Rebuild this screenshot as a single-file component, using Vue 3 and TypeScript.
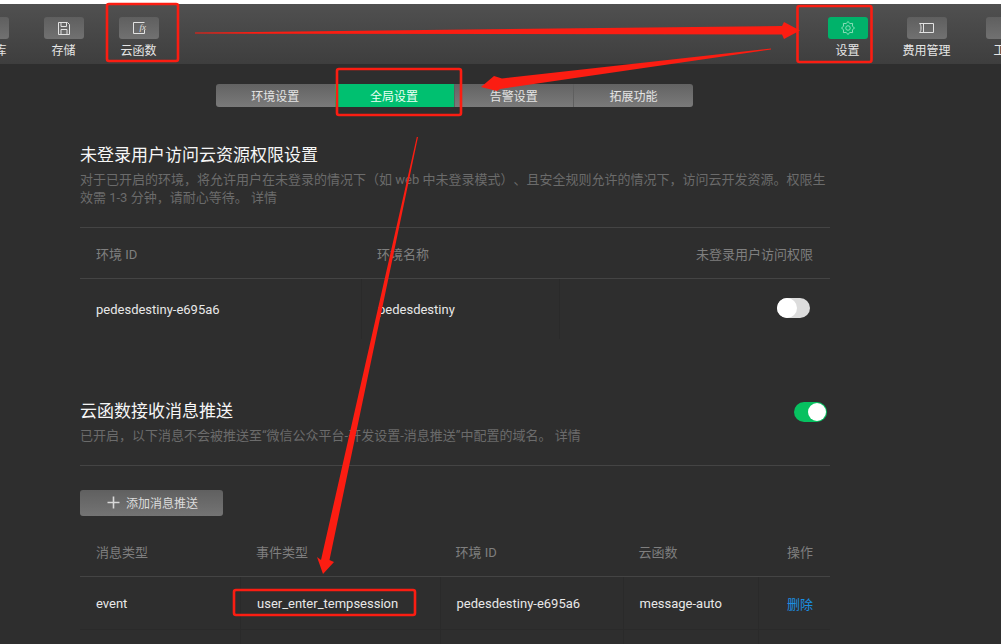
<script setup lang="ts">
const tabs = ['环境设置', '全局设置', '告警设置', '拓展功能']
</script>

<template>
  <div class="page">
    <header class="toolbar">
      <div class="group left">
        <div class="tool"><span class="tool-btn"></span><span class="tool-label">数据库</span></div>
        <div class="tool">
          <span class="tool-btn">
            <svg width="12" height="13" viewBox="0 0 12 13" fill="none" stroke="#e2e2e2" stroke-width="1">
              <path d="M0.5 0.5H9.5L11.5 2.5V12.5H0.5Z" />
              <path d="M3 0.5V4.5H8.5V0.5" />
              <path d="M3 12.5V7.5H9V12.5" />
            </svg>
          </span>
          <span class="tool-label">存储</span>
        </div>
        <div class="tool">
          <span class="tool-btn">
            <svg width="12" height="12" viewBox="0 0 12 12" fill="none" stroke="#e2e2e2" stroke-width="1">
              <path d="M11.5 8V11.5H0.5V0.5H11.5" />
            </svg>
            <i class="fx">fx</i>
          </span>
          <span class="tool-label">云函数</span>
        </div>
      </div>
      <div class="group right">
        <div class="tool wide">
          <span class="tool-btn active">
            <svg width="14" height="14" viewBox="0 0 16 16" fill="none" stroke="#8fe0bb" stroke-width="1.1">
              <path d="M8 .5L10.07 3.01L13.3 2.7L12.99 5.93L15.5 8L12.99 10.07L13.3 13.3L10.07 12.99L8 15.5L5.93 12.99L2.7 13.3L3.01 10.07L.5 8L3.01 5.93L2.7 2.7L5.93 3.01Z" />
              <circle cx="8" cy="8" r="2.6" />
            </svg>
          </span>
          <span class="tool-label">设置</span>
        </div>
        <div class="tool wide">
          <span class="tool-btn">
            <svg width="17" height="12" viewBox="0 0 17 12" fill="none" stroke="#e2e2e2" stroke-width="1">
              <path d="M1.5 1.5H15.5V10.5H1.5C3 9 3 8 3 6C3 4 3 3 1.5 1.5Z" />
              <path d="M5.5 1.5V10.5" />
            </svg>
          </span>
          <span class="tool-label">费用管理</span>
        </div>
        <div class="tool wide"><span class="tool-btn"></span><span class="tool-label">工具</span></div>
      </div>
    </header>

    <main class="content">
      <nav class="tabs">
        <span v-for="(t, i) in tabs" :key="t" class="tab" :class="{ on: i === 1 }">{{ t }}</span>
      </nav>

      <section class="first">
        <h2>未登录用户访问云资源权限设置</h2>
        <p class="desc">对于已开启的环境，将允许用户在未登录的情况下（如 web 中未登录模式）、且安全规则允许的情况下，访问云开发资源。权限生<br />效需 1-3 分钟，请耐心等待。 详情</p>
        <div class="table t1">
          <div class="row head">
            <span class="cell">环境 ID</span>
            <span class="cell">环境名称</span>
            <span class="cell end">未登录用户访问权限</span>
          </div>
          <div class="row body">
            <span class="cell">pedesdestiny-e695a6</span>
            <span class="cell">pedesdestiny</span>
            <span class="cell end"><span class="switch"></span></span>
          </div>
        </div>
      </section>

      <section class="second">
        <div class="title-row">
          <h2>云函数接收消息推送</h2>
          <span class="switch on"></span>
        </div>
        <p class="desc solo">已开启，以下消息不会被推送至“微信公众平台-开发设置-消息推送”中配置的域名。 详情</p>
        <button class="add" type="button">
          <svg width="13" height="13" viewBox="0 0 13 13" stroke="#d8d8d8" stroke-width="1.6"><path d="M6.5 0.5V12.5M0.5 6.5H12.5" /></svg>
          添加消息推送
        </button>
        <div class="table t2">
          <div class="row head">
            <span class="cell">消息类型</span>
            <span class="cell">事件类型</span>
            <span class="cell">环境 ID</span>
            <span class="cell">云函数</span>
            <span class="cell end">操作</span>
          </div>
          <div class="row body">
            <span class="cell">event</span>
            <span class="cell">user_enter_tempsession</span>
            <span class="cell">pedesdestiny-e695a6</span>
            <span class="cell">message-auto</span>
            <span class="cell end"><a class="link">删除</a></span>
          </div>
          <div class="row empty">
            <span class="cell"></span><span class="cell"></span><span class="cell"></span><span class="cell"></span><span class="cell"></span>
          </div>
        </div>
      </section>
    </main>

    <svg class="marks" width="1001" height="644" viewBox="0 0 1001 644" fill="none">
      <g stroke="#fb1d12" stroke-width="2.6">
        <rect x="107" y="4" width="71" height="57" rx="2" />
        <rect x="797.5" y="6" width="74" height="56" rx="2" />
        <rect x="337" y="69" width="124" height="46" rx="2" />
        <rect x="234" y="590" width="181" height="25" rx="2" />
      </g>
      <g fill="#fb1d12">
        <path d="M195 32.6L782 26L784 22L800 30.5L784 39L782 34.5L195 33.6Z" />
        <path d="M771 48.5L502 78.5L494 76L481 87L497 91L500 89L771 49.4Z" />
        <path d="M418 137L329.5 560L334 562L323 574L317 557L321 560L416.8 137Z" />
      </g>
    </svg>
  </div>
</template>

<style>
html, body { margin: 0; background: #fff; }
</style>

<style scoped>
.page {
  position: relative;
  width: 1001px;
  height: 644px;
  overflow: hidden;
  box-sizing: border-box;
  padding-top: 4px;
  background: #2e2e2e;
  font-family: Roboto, "Noto Sans CJK SC", sans-serif;
  text-spacing-trim: space-all;
  color: #e8e8e8;
}
.page::before {
  content: "";
  position: absolute;
  inset: 0 0 auto 0;
  height: 4px;
  background: #fff;
}
.toolbar {
  display: flex;
  height: 60px;
  background: linear-gradient(#505050, #3e3e3e);
  overflow: hidden;
}
.group { display: flex; flex: none; }
.left { margin-left: -49px; }
.right { margin-left: auto; margin-right: -44px; }
.tool {
  display: flex;
  flex-direction: column;
  align-items: center;
  flex: none;
  width: 75px;
  padding-top: 13px;
}
.tool.wide { width: 79px; }
.tool-btn {
  position: relative;
  display: flex;
  align-items: center;
  justify-content: center;
  width: 40px;
  height: 22px;
  border-radius: 3px;
  background: linear-gradient(#5f5f5f, #717171);
}
.tool-btn.active { background: #00b26a; }
.fx {
  position: absolute;
  left: 21px;
  top: 5px;
  font-family: "Liberation Serif", serif;
  font-size: 9px;
  line-height: 11px;
  color: #e2e2e2;
}
.tool-label {
  margin-top: 4px;
  font-size: 12px;
  line-height: 17px;
  color: #e6e6e6;
}
.content { padding: 20px 171px 0 80px; }
.tabs {
  display: flex;
  width: 477px;
  height: 23px;
  margin-left: 136px;
  border-radius: 3px;
  overflow: hidden;
  background: linear-gradient(#636363, #7a7a7a);
}
.tab {
  flex: 1;
  font-size: 12px;
  line-height: 26px;
  text-align: center;
  color: #e4e4e4;
  border-left: 1px solid #5f5f5f;
}
.tab:first-child { border-left: 0; }
.tab.on {
  background: #00c070;
  border-left: 0;
  color: #eafff4;
}
h2 {
  margin: 0;
  font-size: 17px;
  font-weight: 400;
  line-height: 24px;
  color: #f6f6f6;
}
.first { margin-top: 36px; }
.desc {
  margin: 4px 0 0;
  font-size: 13px;
  line-height: 18px;
  color: #6b6b6b;
  white-space: nowrap;
}
.table { margin-top: 20px; }
.row { display: grid; }
.t1 .row { grid-template-columns: 281px 198px 271px; }
.t2 .row { grid-template-columns: 160px 199.5px 183px 135.5px 72px; }
.t1 { border-top: 1px solid #444; }
.head {
  height: 50px;
  border-bottom: 1px solid #444;
  color: #7f7f7f;
}
.cell {
  display: flex;
  align-items: center;
  padding: 0 17px 0 16px;
  font-size: 13px;
  white-space: nowrap;
  min-width: 0;
}
.cell.end { justify-content: flex-end; }
.body { height: 52px; border-bottom: 1px solid #2a2a2a; }
.body .cell + .cell, .empty .cell + .cell { border-left: 1px solid #2a2a2a; }
.t1 .body { height: 60px; border-bottom: 0; }
.empty { height: 20px; }
.switch {
  position: relative;
  display: block;
  flex: none;
  width: 33px;
  height: 20px;
  margin: 0 3px 2px 0;
  border-radius: 10px;
  background: #dcdcdc;
}
.switch::after {
  content: "";
  position: absolute;
  left: 0;
  top: 0;
  width: 20px;
  height: 20px;
  border-radius: 50%;
  background: #fff;
}
.switch.on { background: #07c160; margin: 2px 3px 0 0; }
.switch.on::after { left: 14px; top: 1px; width: 18px; height: 18px; }
.second { margin-top: 60px; }
.title-row {
  display: flex;
  align-items: center;
  justify-content: space-between;
}
.desc.solo {
  margin-top: 4px;
  padding-bottom: 20px;
  border-bottom: 1px solid #444;
}
.add {
  display: flex;
  align-items: center;
  gap: 6px;
  box-sizing: border-box;
  width: 143px;
  height: 26px;
  margin-top: 24px;
  padding: 0 0 2px 27px;
  border: 0;
  border-radius: 3px;
  background: linear-gradient(#606060, #747474);
  color: #dcdcdc;
  font: inherit;
  font-size: 12px;
}
.t2 { margin-top: 10px; }
.link { color: #1a8fe3; }
.marks {
  position: absolute;
  left: 0;
  top: 0;
  pointer-events: none;
}
</style>
